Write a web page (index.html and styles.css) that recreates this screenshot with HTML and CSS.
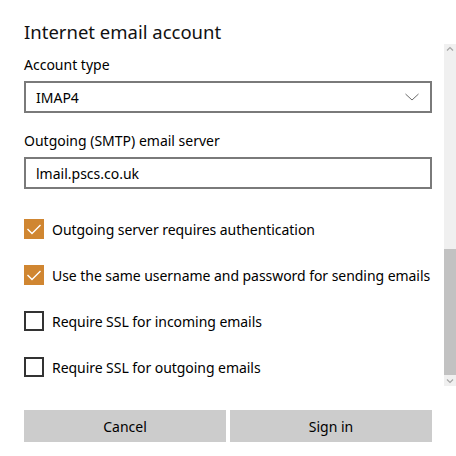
FILE: index.html
```html
<!DOCTYPE html>
<html lang="en">
<head>
    <meta charset="UTF-8">
    <meta name="viewport" content="width=device-width, initial-scale=1.0">
    <title>Internet email account</title>
    <link rel="stylesheet" href="styles.css">
</head>
<body>
    <div class="dialog">
        <h1 class="title">Internet email account</h1>

        <div class="field">
            <label class="field-label">Account type</label>
            <div class="select">
                <span>IMAP4</span>
                <svg class="chevron" width="16" height="8" viewBox="0 0 16 8">
                    <polyline points="1.5,1 8,7 14.5,1" fill="none" stroke="#6b6b6b" stroke-width="1"/>
                </svg>
            </div>
        </div>

        <div class="field">
            <label class="field-label">Outgoing (SMTP) email server</label>
            <div class="textbox">lmail.pscs.co.uk</div>
        </div>

        <div class="checks">
            <div class="check">
                <span class="box checked">
                    <svg width="20" height="20" viewBox="0 0 20 20">
                        <polyline points="3.5,10 8,14.5 16.5,6" fill="none" stroke="#fff" stroke-width="1.4"/>
                    </svg>
                </span>
                <span class="check-text">Outgoing server requires authentication</span>
            </div>
            <div class="check">
                <span class="box checked">
                    <svg width="20" height="20" viewBox="0 0 20 20">
                        <polyline points="3.5,10 8,14.5 16.5,6" fill="none" stroke="#fff" stroke-width="1.4"/>
                    </svg>
                </span>
                <span class="check-text">Use the same username and password for sending emails</span>
            </div>
            <div class="check">
                <span class="box"></span>
                <span class="check-text">Require SSL for incoming emails</span>
            </div>
            <div class="check">
                <span class="box"></span>
                <span class="check-text">Require SSL for outgoing emails</span>
            </div>
        </div>

        <div class="actions">
            <button class="btn">Cancel</button>
            <button class="btn">Sign in</button>
        </div>

        <!-- scroll viewer bar on the right edge -->
        <div class="scrollbar">
            <svg class="arrow" width="12" height="10" viewBox="0 0 12 10">
                <polyline points="3,6.5 6,3.5 9,6.5" fill="none" stroke="#a6a6a6" stroke-width="1.2"/>
            </svg>
            <div class="track">
                <div class="thumb"></div>
            </div>
            <svg class="arrow" width="12" height="10" viewBox="0 0 12 10">
                <polyline points="3,3.5 6,6.5 9,3.5" fill="none" stroke="#a6a6a6" stroke-width="1.2"/>
            </svg>
        </div>
    </div>
</body>
</html>
```

FILE: styles.css
```css
body {
    margin: 0;
    background: #fff;
    color: #000;
    font-family: "Noto Sans", "Open Sans", sans-serif;
}
.dialog {
    position: relative;
    width: 456px;
    height: 456px;
    box-sizing: border-box;
    padding: 18px 24px 0 24px;
}
.title {
    margin: 0;
    font-size: 18.5px;
    font-weight: 400;
    line-height: 28px;
    color: #111;
}
.field {
    display: flex;
    flex-direction: column;
}
.field-label {
    font-size: 14px;
    line-height: 20px;
    margin-top: 9px;
    margin-bottom: 6px;
}
.field + .field .field-label {
    margin-top: 18px;
}
.select,
.textbox {
    height: 32px;
    box-sizing: border-box;
    border: 2px solid #7a7a7a;
    padding: 0 10px;
    display: flex;
    align-items: center;
    justify-content: space-between;
    font-size: 14px;
}
.checks {
    display: flex;
    flex-direction: column;
    gap: 26px;
    margin-top: 30px;
}
.check {
    display: flex;
    align-items: center;
    height: 20px;
    gap: 8px;
    font-size: 14px;
    white-space: nowrap;
}
.check-text {
    letter-spacing: -0.05px;
}
.box {
    width: 20px;
    height: 20px;
    box-sizing: border-box;
    border: 2px solid #333;
    flex: none;
}
.box.checked {
    border: none;
    background: #d08631;
}
.box svg {
    display: block;
}
.actions {
    display: grid;
    grid-template-columns: 1fr 1fr;
    gap: 4px;
    margin-top: 33px;
}
.btn {
    height: 32px;
    border: none;
    background: #cccccc;
    font-family: inherit;
    font-size: 14px;
    color: #000;
    padding: 0;
}
.scrollbar {
    position: absolute;
    right: 0;
    top: 44px;
    width: 12px;
    height: 342px;
    background: #f0f0f0;
    display: flex;
    flex-direction: column;
}
.arrow {
    display: block;
    flex: none;
}
.track {
    flex: 1;
    display: flex;
    flex-direction: column;
    justify-content: flex-end;
}
.thumb {
    height: 126px;
    margin-bottom: 1px;
    background: #c2c2c2;
}
```
